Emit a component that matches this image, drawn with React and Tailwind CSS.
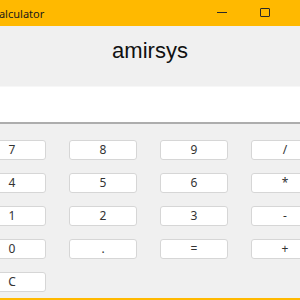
export default function App() {
  const keys = ["7", "8", "9", "/", "4", "5", "6", "*", "1", "2", "3", "-", "0", ".", "=", "+", "C"];
  return (
    <div className="w-[300px] h-[300px] overflow-hidden bg-[#f0f0f0] flex flex-col" style={{ fontFamily: '"Noto Sans", "Open Sans", sans-serif' }}>
      <div className="h-[26px] shrink-0 bg-[#ffb900] flex items-center">
        <span className="ml-[-8px] text-[11px] text-[#1a1a1a] leading-none mt-[1px]">Calculator</span>
        <div className="ml-auto mr-[30px] flex items-center">
          <div className="w-[10px] h-px bg-[#2a2a2a] mt-[-1px]" />
          <div className="ml-[33px] w-[10px] h-[9px] border border-[#2a2a2a] rounded-[1px] mt-[-1px]" />
        </div>
      </div>
      <div className="flex-1 flex flex-col">
        <div className="pt-[14px] h-[60px] text-center text-[22px] leading-[22px] text-[#111]" style={{ fontFamily: '"Liberation Sans", Arial, sans-serif' }}>
          amirsys
        </div>
        <div className="h-[38px] bg-white border-b-2 border-[#adadad] border-t border-t-[#f7f7f7]" />
        <div className="mt-[16px] ml-[-22px] grid grid-cols-[68px_68px_68px_68px] gap-x-[23px] gap-y-[13px] w-[340px]">
          {keys.map((k) => (
            <div key={k} className="h-[20px] bg-white border border-[#d6d6d6] rounded-[3px] flex items-center justify-center text-[12px] text-[#333] leading-none">
              {k}
            </div>
          ))}
        </div>
      </div>
      <div className="h-[2px] shrink-0 bg-[#ffb900]" />
    </div>
  );
}
